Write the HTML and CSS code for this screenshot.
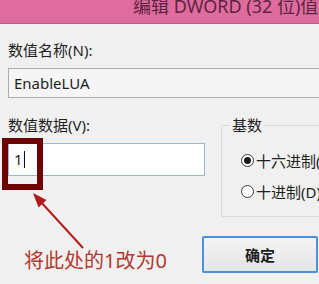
FILE: index.html
```html
<!DOCTYPE html>
<html>

<head>
    <meta charset="utf-8">
    <title>编辑 DWORD (32 位)值</title>
    <link rel="stylesheet" href="styles.css">
</head>

<body>
    <div class="titlebar">编辑 DWORD (32 位)值</div>
    <div class="dialog">
        <div class="label label-name">数值名称(N):</div>
        <div class="name-box">EnableLUA</div>

        <div class="data-row">
            <div class="data-left">
                <div class="label">数值数据(V):</div>
                <div class="value-wrap">
                    <div class="value-box">1<span class="caret"></span></div>
                    <div class="mark-box"></div>
                </div>
            </div>
            <fieldset class="radix">
                <legend>基数</legend>
                <div class="radio-row">
                    <span class="radio checked"></span>
                    <span>十六进制(H)</span>
                </div>
                <div class="radio-row">
                    <span class="radio"></span>
                    <span>十进制(D)</span>
                </div>
            </fieldset>
        </div>

        <div class="bottom-row">
            <div class="note">将此处的1改为0</div>
            <div class="button">确定</div>
        </div>
    </div>

    <svg class="arrow" width="319" height="284" viewBox="0 0 319 284">
        <line x1="83" y1="248" x2="40" y2="201" stroke="#b31a1a" stroke-width="2"/>
        <polygon points="33,193 46.5,200 38.5,207.5" fill="#b31a1a"/>
    </svg>
</body>

</html>
```

FILE: styles.css
```css
body {
    margin: 0;
    width: 319px;
    height: 284px;
    overflow: hidden;
    background-color: #f0f0f0;
    font-family: "Noto Sans", "Noto Sans CJK SC", sans-serif;
    font-size: 15px;
    color: #1e1e1e;
}

.titlebar {
    height: 23px;
    line-height: 12px;
    padding-left: 133px;
    background-color: #de6c9d;
    border-bottom: 1px solid #c65b8a;
    color: #5e2343;
    font-size: 18px;
    white-space: nowrap;
    overflow: hidden;
}

.dialog {
    padding: 0 8px;
}

.label {
    line-height: 20px;
    white-space: nowrap;
}

.label-name {
    margin-top: 16px;
}

.name-box {
    box-sizing: border-box;
    height: 30px;
    margin-top: 8px;
    margin-right: -30px;
    padding-left: 5px;
    line-height: 28px;
    border: 1px solid #acacac;
    background-color: #f5f5f5;
}

.data-row {
    display: flex;
    margin-top: 17px;
}

.data-left {
    width: 197px;
    flex-shrink: 0;
}

.value-wrap {
    position: relative;
    margin-top: 8px;
}

.value-box {
    box-sizing: border-box;
    height: 33px;
    padding-left: 5px;
    line-height: 31px;
    border: 1px solid #8fb9e2;
    background-color: white;
    display: flex;
    align-items: center;
}

.caret {
    display: inline-block;
    height: 17px;
    margin-left: 1px;
    border-left: 1px solid #111;
}

.mark-box {
    position: absolute;
    left: -6px;
    top: -5px;
    width: 41px;
    height: 52px;
    box-sizing: border-box;
    border: 6px solid #6f0202;
}

.radix {
    flex: 1;
    margin: 0 -40px 0 16px;
    padding: 15px 0 15px 19px;
    border: 1px solid #d9d9d9;
    border-radius: 2px;
    min-width: 0;
}

.radix legend {
    padding: 0 2px;
    margin-left: -11px;
    line-height: 20px;
}

.radio-row {
    display: flex;
    align-items: center;
    gap: 2px;
    height: 20px;
    white-space: nowrap;
}

.radio-row + .radio-row {
    margin-top: 11px;
}

.radio {
    box-sizing: border-box;
    width: 13px;
    height: 13px;
    border: 1px solid #3a3a3a;
    border-radius: 50%;
    background-color: white;
    display: flex;
    align-items: center;
    justify-content: center;
}

.radio.checked::after {
    content: "";
    width: 7px;
    height: 7px;
    border-radius: 50%;
    background-color: #1a1a1a;
}

.bottom-row {
    display: flex;
    justify-content: space-between;
    margin-top: 19px;
    margin-right: -7px;
}

.note {
    margin-top: 11px;
    padding-left: 16px;
    font-size: 20px;
    line-height: 28px;
    color: #b3382f;
    white-space: nowrap;
}

.button {
    box-sizing: border-box;
    width: 116px;
    height: 37px;
    line-height: 35px;
    text-align: center;
    font-weight: bold;
    border: 2px solid #4a90e2;
    border-radius: 2px;
    background: linear-gradient(#f4f4f4, #e4e4e4);
}

.arrow {
    position: absolute;
    left: 0;
    top: 0;
    pointer-events: none;
}
```
